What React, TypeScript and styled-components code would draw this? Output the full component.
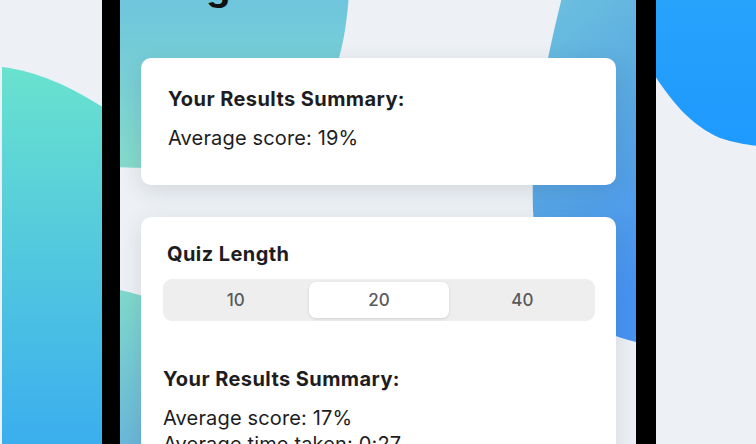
import React, { useState } from "react";
import styled, { createGlobalStyle } from "styled-components";

const GlobalStyle = createGlobalStyle`
  html, body {
    margin: 0;
    padding: 0;
    background: #edf1f6;
  }
  * { box-sizing: border-box; }
`;

const Page = styled.div`
  position: relative;
  width: 756px;
  height: 444px;
  overflow: hidden;
  display: flex;
  padding-left: 102px;
  background: #edf1f6;
  font-family: Inter, "Noto Sans", sans-serif;
`;

const Backdrop = styled.svg`
  position: absolute;
  inset: 0;
  width: 100%;
  height: 100%;
  z-index: 0;
`;

const Phone = styled.div`
  position: relative;
  z-index: 1;
  width: 554px;
  height: 444px;
  background: #000;
  padding: 0 20px 0 18px;
  display: flex;
`;

const Screen = styled.div`
  position: relative;
  flex: 1;
  overflow: hidden;
  background: #edf1f5;
`;

const Content = styled.div`
  position: relative;
  z-index: 1;
  display: flex;
  flex-direction: column;
  padding: 0 20px 0 21px;
`;

const Title = styled.h1`
  margin: -37px 0 49px 1px;
  font-size: 38px;
  line-height: 46px;
  font-weight: 700;
  color: #111;
  letter-spacing: 0.6px;
`;

const Card = styled.section<{ $pad: string }>`
  background: #fff;
  border-radius: 10px;
  box-shadow: 0 6px 22px rgba(40, 50, 70, 0.13);
  padding: ${(p) => p.$pad};
  display: flex;
  flex-direction: column;
`;

const Gap = styled.div<{ $h: number }>`
  height: ${(p) => p.$h}px;
  flex: none;
`;

const Heading = styled.h3<{ $indent?: number }>`
  margin: 0 0 0 ${(p) => p.$indent ?? 0}px;
  font-size: 20px;
  line-height: 24px;
  font-weight: 700;
  letter-spacing: 0.42px;
  color: #1d1d1f;
`;

const Values = styled.div`
  margin-top: 14px;
  display: flex;
  flex-direction: column;
`;

const Value = styled.p`
  margin: 0;
  font-size: 20px;
  line-height: 26px;
  font-weight: 400;
  letter-spacing: 0.15px;
  color: #1d1d1f;
`;

const Segmented = styled.div`
  margin-top: 13px;
  margin-bottom: 46px;
  height: 42px;
  padding: 3px;
  border-radius: 9px;
  background: #eeeeef;
  display: grid;
  grid-template-columns: repeat(3, 1fr);
  gap: 4px;
`;

const Segment = styled.button<{ $active: boolean }>`
  border: none;
  border-radius: 7px;
  background: ${(p) => (p.$active ? "#fff" : "transparent")};
  box-shadow: ${(p) => (p.$active ? "0 1px 3px rgba(0,0,0,0.12)" : "none")};
  font-family: Inter, "Noto Sans", sans-serif;
  font-size: 17px;
  font-weight: 500;
  color: #5a5a5c;
  cursor: pointer;
  padding: 0;
`;

export default function App() {
  const [len, setLen] = useState(20);
  return (
    <>
      <GlobalStyle />
      <Page>
        <Backdrop viewBox="0 0 756 444" preserveAspectRatio="none">
          <defs>
            <linearGradient id="lg" x1="0" y1="0" x2="0" y2="1">
              <stop offset="0" stopColor="#69e2cf" />
              <stop offset="1" stopColor="#39acef" />
            </linearGradient>
            <linearGradient id="rg" x1="0" y1="0" x2="0" y2="1">
              <stop offset="0" stopColor="#28a3fb" />
              <stop offset="1" stopColor="#1e99fe" />
            </linearGradient>
          </defs>
          <path d="M2 67 C 35 71, 70 85, 110 112 L 110 460 L 2 460 Z" fill="url(#lg)" />
          <path d="M650 -10 L 650 68 C 670 100, 690 125, 720 138 C 735 143, 748 145, 760 146 L 760 -10 Z" fill="url(#rg)" />
        </Backdrop>
        <Phone>
          <Screen>
            <Backdrop viewBox="0 0 516 444" preserveAspectRatio="none">
              <defs>
                <linearGradient id="s1" x1="0" y1="0" x2="0" y2="1">
                  <stop offset="0" stopColor="#6cc3df" />
                  <stop offset="1" stopColor="#84dbcb" />
                </linearGradient>
                <linearGradient id="s2" x1="0" y1="0" x2="0.3" y2="1">
                  <stop offset="0" stopColor="#70c5de" />
                  <stop offset="0.5" stopColor="#5aa9e2" />
                  <stop offset="1" stopColor="#4793f2" />
                </linearGradient>
                <linearGradient id="s3" x1="0" y1="0" x2="0" y2="1">
                  <stop offset="0" stopColor="#80dacc" />
                  <stop offset="1" stopColor="#68b4da" />
                </linearGradient>
              </defs>
              <path d="M-20 -20 L 230 -20 C 226 40, 220 100, 160 140 C 110 170, 40 170, -20 166 Z" fill="url(#s1)" />
              <path d="M446 -20 C 432 40, 410 120, 413 210 C 416 290, 460 330, 520 343 L 540 343 L 540 -20 Z" fill="url(#s2)" />
              <path d="M-20 286 C 60 300, 150 340, 220 460 L -20 460 Z" fill="url(#s3)" />
            </Backdrop>
            <Content>
              <Title>Progress</Title>
              <Card $pad="29px 28px 34px 27px">
                <Heading>Your Results Summary:</Heading>
                <Values>
                  <Value>Average score: 19%</Value>
                </Values>
              </Card>
              <Gap $h={32} />
              <Card $pad="25px 21px 30px 22px">
                <Heading $indent={4}>Quiz Length</Heading>
                <Segmented>
                  {[10, 20, 40].map((n) => (
                    <Segment key={n} $active={len === n} onClick={() => setLen(n)}>
                      {n}
                    </Segment>
                  ))}
                </Segmented>
                <Heading>Your Results Summary:</Heading>
                <Values>
                  <Value>Average score: 17%</Value>
                  <Value>Average time taken: 0:27</Value>
                </Values>
              </Card>
            </Content>
          </Screen>
        </Phone>
      </Page>
    </>
  );
}
